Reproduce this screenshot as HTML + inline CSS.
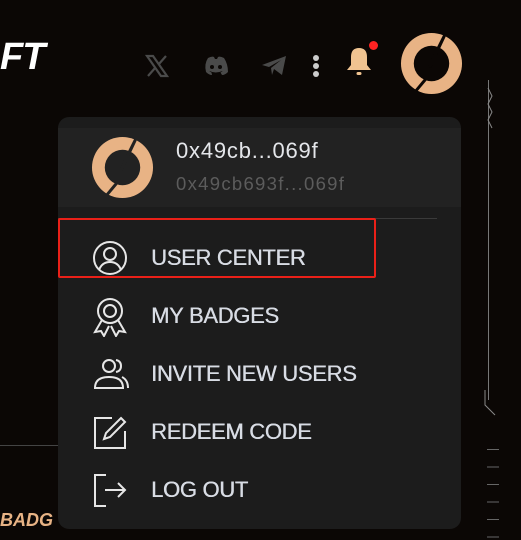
<!DOCTYPE html>
<html><head><meta charset="utf-8"><style>
body{margin:0;width:521px;height:537px;background:#0b0705;position:relative;overflow:hidden;font-family:"Liberation Sans",sans-serif}
.a{position:absolute}
.menu{left:58px;top:117px;width:403px;height:412px;background:#1c1c1c;border-radius:11px}
.hdr{left:58px;top:128px;width:403px;height:79px;background:#222222}
.item{position:absolute;left:151px;font-size:22px;color:#d8dce4;letter-spacing:-0.3px;line-height:26px;text-shadow:0.4px 0 0 #d8dce4}
.ic{position:absolute;left:92px}
</style></head><body>
<div class="a" style="left:0;top:36px;font-size:38px;font-weight:bold;font-style:italic;color:#fff;letter-spacing:-1px">FT</div>
<svg class="a" style="left:145px;top:54px" width="24" height="24" viewBox="0 0 24 24"><path d="M2 2h6l14 20h-6z M3 22L10.5 13.5 M21 2L13.5 10.5" stroke="#4a4a4a" stroke-width="2.2" fill="none"/></svg>
<svg class="a" style="left:203px;top:56px" width="26" height="20" viewBox="0 0 26 20"><path d="M5 2Q9 0 11 1L12 3h2l1-2q2-1 6 1q4 6 4 14q-3 3-6 3l-1.5-2.5q2-1 2-1.5q-7 3-13 0q0 .5 2 1.5L9 19q-3 0-6-3Q1 8 5 2z" fill="#4a4a4a"/><circle cx="9" cy="11" r="2" fill="#0b0705"/><circle cx="17" cy="11" r="2" fill="#0b0705"/></svg>
<svg class="a" style="left:261px;top:55px" width="26" height="22" viewBox="0 0 26 22"><path d="M1 10L25 1 21 20 13 14 11 20 10 13 20 5 8 12z" fill="#4a4a4a"/></svg>
<div class="a" style="left:313px;top:55px;width:6px;height:6px;border-radius:3px;background:#ccc"></div>
<div class="a" style="left:313px;top:63px;width:6px;height:6px;border-radius:3px;background:#ccc"></div>
<div class="a" style="left:313px;top:71px;width:6px;height:6px;border-radius:3px;background:#ccc"></div>
<svg class="a" style="left:344px;top:46px" width="30" height="32" viewBox="0 0 30 32"><path d="M15 2q-8 0-8 9v8l-4 5h24l-4-5v-8q0-9-8-9z" fill="#f0c391"/><rect x="12.5" y="26" width="5" height="3" rx="1.5" fill="#f0c391"/></svg>
<div class="a" style="left:369px;top:41px;width:9px;height:9px;border-radius:5px;background:#f22"></div>
<svg class="a" style="left:400px;top:32px" width="63" height="63" viewBox="0 0 64 64"><circle cx="32" cy="32" r="31" fill="#e8b385"/><circle cx="32" cy="32" r="18" fill="#0b0705"/><path d="M46 2L30 36 36 22z" stroke="#0b0705" stroke-width="3" fill="#0b0705"/><path d="M16 60L26 48" stroke="#0b0705" stroke-width="3"/></svg>
<div class="a" style="left:488px;top:80px;width:1px;height:320px;background:#777"></div>
<svg class="a" style="left:480px;top:80px" width="20" height="340"><path d="M8 8l4 8-4 8 4 8-4 8 4 8" stroke="#888" fill="none"/><path d="M5 310v15l10 10" stroke="#888" fill="none"/></svg>
<div class="a" style="left:487px;top:440px;width:12px;height:100px;background:repeating-linear-gradient(#0b0705 0 9px,#666 9px 10px,#0b0705 10px 17.5px)"></div>
<div class="a" style="left:0;top:445px;width:58px;height:1px;background:#444"></div>
<div class="a" style="left:0;top:510px;font-size:18px;font-weight:bold;font-style:italic;color:#e8b385">BADG</div>
<div class="a menu"></div>
<div class="a hdr"></div>
<svg class="a" style="left:91px;top:136px" width="63" height="63" viewBox="0 0 64 64"><circle cx="32" cy="32" r="31" fill="#e8b385"/><circle cx="32" cy="32" r="18" fill="#222"/><path d="M46 2L30 36 36 22z" stroke="#222" stroke-width="3" fill="#222"/><path d="M16 60L26 48" stroke="#222" stroke-width="3"/></svg>
<div class="a" style="left:176px;top:138px;font-size:22px;letter-spacing:0.8px;color:#e4e6ea">0x49cb...069f</div>
<div class="a" style="left:176px;top:173px;font-size:18.5px;letter-spacing:1.3px;color:#5c5c5c">0x49cb693f...069f</div>
<div class="a" style="left:58px;top:218px;width:379px;height:1px;background:#3a3a3a"></div>
<div class="a" style="left:58px;top:218px;width:314px;height:56px;border:2px solid #ea2018;border-radius:2px"></div>
<svg class="ic" style="top:240px" width="36" height="36" viewBox="0 0 36 36" fill="none" stroke="#e6e6e6" stroke-width="2"><circle cx="18" cy="18" r="16"/><circle cx="18" cy="14" r="6"/><path d="M7 30q3-8 11-8t11 8"/></svg>
<div class="item" style="top:245px">USER CENTER</div>
<svg class="ic" style="top:297px" width="36" height="40" viewBox="0 0 36 40" fill="none" stroke="#e6e6e6" stroke-width="2"><circle cx="18" cy="14" r="12"/><circle cx="18" cy="14" r="6"/><path d="M10 23l-7 12 6-1 3 5 5-10M26 23l7 12-6-1-3 5-5-10"/></svg>
<div class="item" style="top:303px">MY BADGES</div>
<svg class="ic" style="top:358px" width="38" height="34" viewBox="0 0 38 34" fill="none" stroke="#e6e6e6" stroke-width="2"><circle cx="17" cy="8" r="6"/><path d="M3 30q0-11 14-11t14 11z"/><path d="M24 2q5 1 5 6t-5 6M30 19q6 3 6 11"/></svg>
<div class="item" style="top:361px">INVITE NEW USERS</div>
<svg class="ic" style="top:415px" width="36" height="36" viewBox="0 0 36 36" fill="none" stroke="#e6e6e6" stroke-width="2"><path d="M20 3H3v30h30V16"/><path d="M29 3l4 4-15 15-6 2 2-6z"/></svg>
<div class="item" style="top:419px">REDEEM CODE</div>
<svg class="ic" style="top:473px" width="36" height="36" viewBox="0 0 36 36" fill="none" stroke="#e6e6e6" stroke-width="2"><path d="M14 2H3v31h11"/><path d="M13 17h20M26 10l7 7-7 7"/></svg>
<div class="item" style="top:477px">LOG OUT</div>
</body></html>
